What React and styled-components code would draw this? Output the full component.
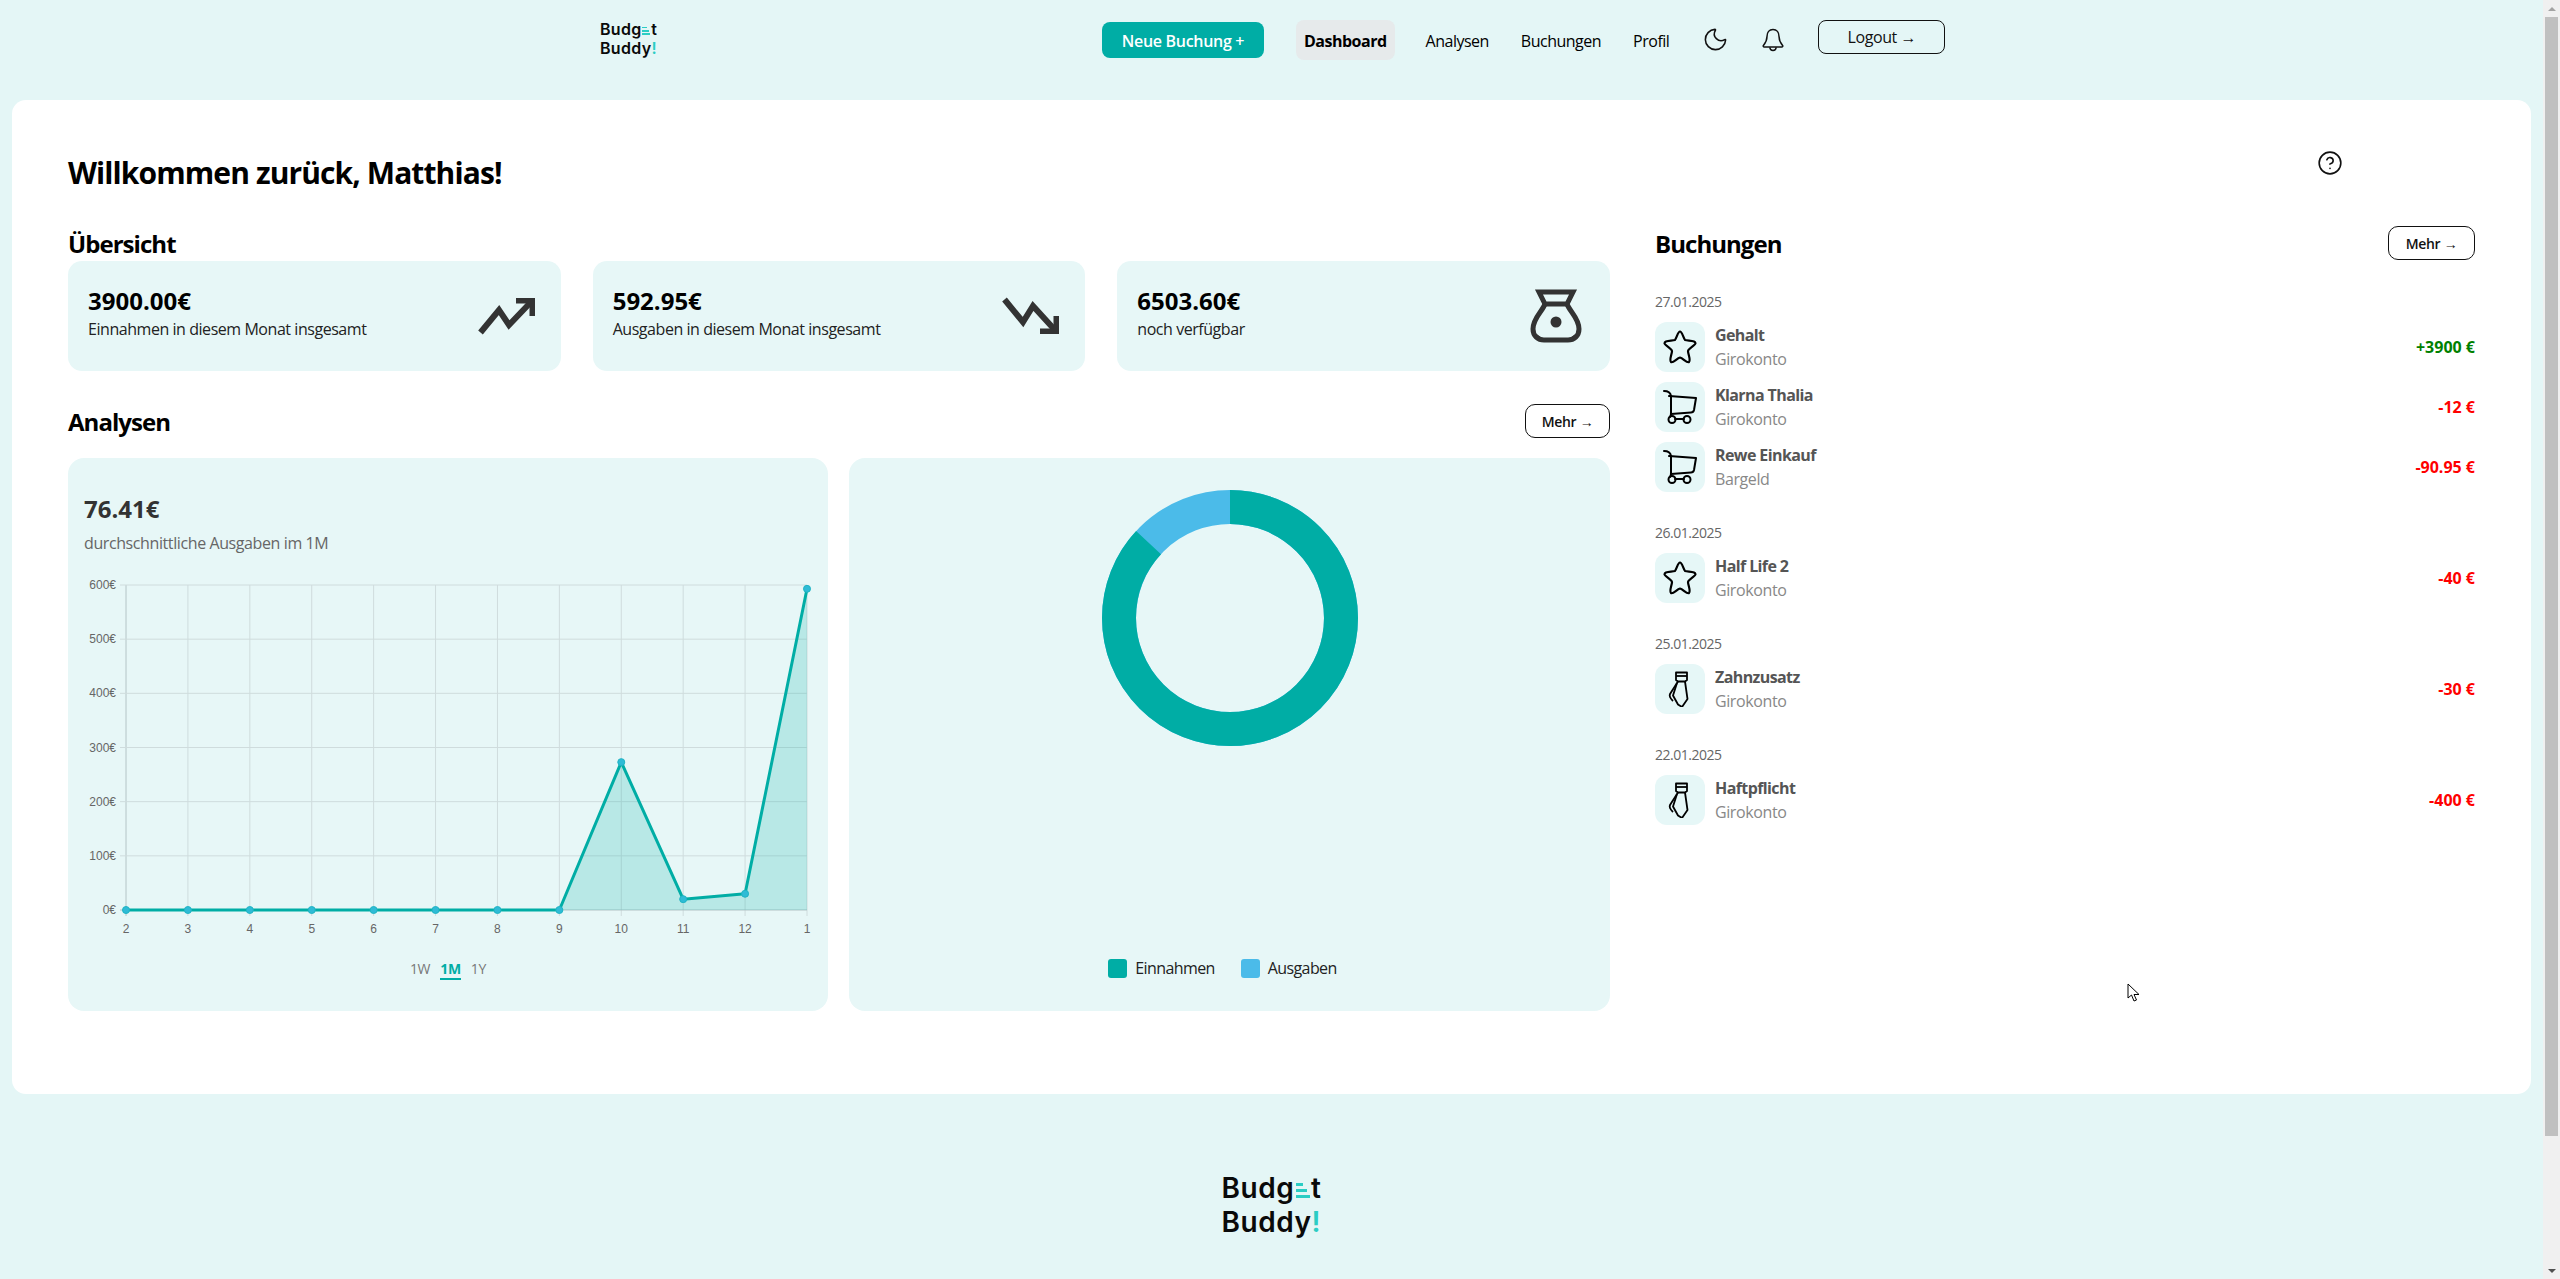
import React from "react";
import styled, { createGlobalStyle } from "styled-components";
import { Moon, CircleHelp } from "lucide-react";

const GlobalStyle = createGlobalStyle`
  html, body {
    margin: 0;
    padding: 0;
    overflow: hidden;
    background: #e4f6f6;
    font-family: "Open Sans", "Noto Sans", "Liberation Sans", sans-serif;
    color: #000;
  }
  * { box-sizing: border-box; }
`;

const Page = styled.div`
  margin-right: 17px;
  height: 1279px;
  display: flex;
  flex-direction: column;
`;

// header
const Header = styled.header`
  height: 100px;
  flex: none;
  display: flex;
  align-items: flex-start;
  padding: 20px 0 0 600px;
`;

const LogoWrap = styled.div`
  font-family: Inter, "Liberation Sans", sans-serif;
  font-weight: 600;
  font-size: ${p => p.$size}px;
  line-height: 1.2;
  letter-spacing: 0.02em;
  color: #0a0a0a;
  width: ${p => p.$width}px;
  flex: none;
  white-space: nowrap;
`;

const LogoBars = styled.span`
  display: inline-block;
  width: 0.5em;
  margin: 0 0.05em;
`;

const LogoBar = styled.i`
  display: block;
  height: 0.1em;
  width: ${p => p.$w}%;
  margin-top: 0.11em;
  background: #2bcdc4;
  &:first-child {
    margin-top: 0;
  }
`;

const Bang = styled.span`
  color: #2bcdc4;
`;

const Nav = styled.nav`
  display: flex;
  align-items: flex-start;
  margin-left: 444px;
`;

const NewButton = styled.button`
  width: 162px;
  height: 36px;
  margin: 2px 32px 0 0;
  padding: 2px 0 0;
  border: 0;
  border-radius: 8px;
  background: #00ada5;
  color: #fff;
  font: 600 16px "Open Sans", sans-serif;
  letter-spacing: -0.3px;
`;

const NavLink = styled.a`
  height: 40px;
  line-height: 42px;
  padding: 0 ${p => (p.$active ? "8px" : "0")};
  margin-right: ${p => (p.$active ? "31px" : "32px")};
  border-radius: 8px;
  font-size: 16px;
  letter-spacing: -0.5px;
  font-weight: ${p => (p.$active ? 700 : 400)};
  background: ${p => (p.$active ? "#e6eaeb" : "transparent")};
`;

const NavIcon = styled.span`
  display: block;
  width: 24px;
  height: 24px;
  margin: 8px 33px 0 ${p => p.$left || 0}px;
`;

const MoonGlyph = styled(Moon)`
  display: block;
  margin: -2px 0 0 -2px;
`;

const LogoutButton = styled.button`
  width: 127px;
  height: 34px;
  border: 1px solid #111;
  border-radius: 8px;
  background: transparent;
  color: #111;
  font: 400 16px "Open Sans", sans-serif;
  letter-spacing: -0.4px;
`;

// main card
const Card = styled.main`
  height: 994px;
  flex: none;
  margin: 0 12px;
  padding: 51px 56px 0;
  background: #fff;
  border-radius: 14px;
`;

const TitleRow = styled.div`
  height: 44px;
  display: flex;
  align-items: center;
  justify-content: space-between;
  padding-right: 132px;
  margin-bottom: 32px;
`;

const Title = styled.h1`
  margin: 0;
  font-size: 30px;
  line-height: 44px;
  font-weight: 700;
  letter-spacing: -0.9px;
`;

const HelpGlyph = styled(CircleHelp)`
  margin-bottom: 20px;
`;

const Columns = styled.div`
  display: grid;
  grid-template-columns: 1542px 820px;
  column-gap: 45px;
`;

const SectionTitle = styled.h2`
  margin: 0;
  font-size: 24px;
  line-height: 34px;
  font-weight: 700;
  letter-spacing: -0.95px;
`;

const SectionRow = styled.div`
  height: 34px;
  display: flex;
  align-items: center;
  justify-content: space-between;
  margin: ${p => p.$margin};
  h2 {
    padding-top: 2px;
  }
`;

const MoreButton = styled.button`
  width: ${p => p.$w}px;
  height: 34px;
  border: 1px solid #111;
  border-radius: 10px;
  background: #fff;
  color: #111;
  font: 600 14px "Open Sans", sans-serif;
  letter-spacing: -0.3px;
`;

const Stats = styled.div`
  display: grid;
  grid-template-columns: repeat(3, 1fr);
  gap: 32px;
`;

const StatCard = styled.div`
  height: 110px;
  display: flex;
  align-items: center;
  justify-content: space-between;
  padding: 0 ${p => p.$right}px 0 20px;
  background: #e7f7f7;
  border-radius: 14px;
`;

const StatText = styled.div`
  padding-bottom: 8px;
`;

const StatValue = styled.div`
  font-size: 24px;
  line-height: 32px;
  font-weight: 700;
  letter-spacing: 0;
`;

const StatLabel = styled.div`
  margin-top: 1px;
  font-size: 16px;
  line-height: 22px;
  letter-spacing: -0.45px;
  color: #222;
`;

const Panels = styled.div`
  display: grid;
  grid-template-columns: 760px 761px;
  gap: 21px;
`;

const Panel = styled.section`
  height: 553px;
  background: #e7f7f7;
  border-radius: 16px;
`;

const LinePanel = styled(Panel)`
  padding-top: 35px;
`;

const DonutPanel = styled(Panel)`
  display: flex;
  flex-direction: column;
  align-items: center;
  justify-content: space-between;
  padding: 32px 0 33px 1px;
`;

const Average = styled.div`
  padding-left: 16px;
  font-size: 24px;
  line-height: 32px;
  font-weight: 700;
  letter-spacing: 0;
  color: #333;
`;

const AverageLabel = styled.div`
  padding-left: 16px;
  margin-top: 7px;
  font-size: 16px;
  line-height: 22px;
  letter-spacing: -0.4px;
  color: #666;
`;

const ChartSvg = styled.svg`
  display: block;
  margin-top: 16px;
`;

const RangeTabs = styled.div`
  display: flex;
  justify-content: center;
  gap: 10px;
  margin-top: 15px;
`;

const RangeTab = styled.span`
  height: 20px;
  line-height: 18px;
  font-size: 14px;
  letter-spacing: -0.3px;
  font-weight: ${p => (p.$active ? 700 : 400)};
  color: ${p => (p.$active ? "#00ada5" : "#777")};
  border-bottom: 2px solid ${p => (p.$active ? "#00ada5" : "transparent")};
`;

const Legend = styled.div`
  display: flex;
  gap: 26px;
  margin-right: 15px;
`;

const LegendItem = styled.div`
  display: flex;
  align-items: center;
  gap: 8px;
  font-size: 16px;
  line-height: 20px;
  letter-spacing: -0.6px;
  color: #222;
`;

const LegendSwatch = styled.span`
  width: 19px;
  height: 19px;
  border-radius: 3px;
  background: ${p => p.$color};
`;

// bookings
const BookingGroup = styled.div`
  margin-bottom: 31px;
`;

const BookingDate = styled.div`
  height: 20px;
  margin-bottom: 10px;
  font-size: 14px;
  line-height: 20px;
  letter-spacing: -0.5px;
  color: #666;
`;

const BookingRows = styled.div`
  display: flex;
  flex-direction: column;
  gap: 10px;
`;

const BookingRow = styled.div`
  display: flex;
  align-items: center;
`;

const BookingIcon = styled.div`
  width: 50px;
  height: 50px;
  flex: none;
  display: flex;
  align-items: center;
  justify-content: center;
  background: #e6f7f7;
  border-radius: 12px;
`;

const BookingText = styled.div`
  flex: 1;
  margin-left: 10px;
`;

const BookingName = styled.div`
  font-size: 16px;
  line-height: 24px;
  font-weight: 700;
  letter-spacing: -0.6px;
  color: #555;
`;

const BookingAccount = styled.div`
  font-size: 16px;
  line-height: 24px;
  letter-spacing: -0.4px;
  color: #888;
`;

const BookingAmount = styled.div`
  font-size: 16px;
  font-weight: 700;
  letter-spacing: 0;
  color: ${p => (p.$income ? "#008000" : "#ff0000")};
`;

const Footer = styled.footer`
  flex: 1;
  display: flex;
  justify-content: center;
  padding-top: 78px;
`;

// window bits lying over the page
const Scrollbar = styled.div`
  position: fixed;
  top: 0;
  right: 0;
  bottom: 0;
  width: 17px;
  display: flex;
  flex-direction: column;
  align-items: center;
  background: #f0f0f0;
`;

const ScrollArrow = styled.span`
  width: 0;
  height: 0;
  border-left: 4px solid transparent;
  border-right: 4px solid transparent;
  border-bottom: ${p => (p.$down ? "0" : "4px solid #a3a3a3")};
  border-top: ${p => (p.$down ? "4px solid #505050" : "0")};
  margin: ${p => (p.$down ? "auto 0 6px" : "7px 0 6px")};
`;

const ScrollThumb = styled.span`
  width: 13px;
  height: 1119px;
  background: #c0c0c0;
`;

const Cursor = styled.svg`
  position: fixed;
  left: 2127px;
  top: 983px;
`;

const TrendUp = () => (
  <svg width="58" height="38" viewBox="0 0 58 38" fill="none">
    <path d="M2.5 35.5L21 13L31 28L52 6" stroke="#333" strokeWidth="6" />
    <path d="M38 1H57V19H51.5V6.5H38Z" fill="#333" />
  </svg>
);

const TrendDown = () => (
  <svg width="58" height="38" viewBox="0 0 58 38" fill="none">
    <path d="M2.5 2.5L21 25L31 9L52 32" stroke="#333" strokeWidth="6" />
    <path d="M38 37H57V19H51.5V31.5H38Z" fill="#333" />
  </svg>
);

const MoneyBag = () => (
  <svg width="52" height="54" viewBox="0 0 52 54" fill="none" stroke="#333" strokeWidth="5">
    <path d="M9 3H43L37 15H15Z" />
    <path d="M15 15C12 23 3 29 3 40C3 47 8 51 14 51H38C44 51 49 47 49 40C49 29 40 23 37 15" />
    <path d="M6 47C10 50 12 51 14 51H38C40 51 42 50 46 47" strokeWidth="4" />
    <circle cx="26" cy="33" r="5.5" fill="#333" stroke="none" />
  </svg>
);

const BellIcon = () => (
  <svg width="24" height="24" viewBox="0 0 24 24" fill="none" stroke="#111" strokeWidth="1.5">
    <path d="M12 1.5C8.2 1.5 6 4.6 6 8.5C6 12.5 4.6 14.8 2.4 17.4C1.9 18.2 2.4 19 3.2 19H20.8C21.6 19 22.1 18.2 21.6 17.4C19.4 14.8 18 12.5 18 8.5C18 4.6 15.8 1.5 12 1.5Z" />
    <path d="M8.8 19.2C9 21.4 10.4 22.6 12 22.6C13.6 22.6 15 21.4 15.2 19.2" />
  </svg>
);

const StarIcon = () => (
  <svg width="36" height="36" viewBox="0 0 36 36" fill="none" stroke="#000" strokeWidth="2.2" strokeLinejoin="round">
    <path d="M18 2.5C20 2.5 21 8 23 11C26 12 33 11 33.5 14C34 16 27 19 26 22C26 25 29 31 27 33C25 34.5 21 29 18 28.5C15 29 11 34.5 9 33C7 31 10 25 10 22C9 19 2 16 2.5 14C3 11 10 12 13 11C15 8 16 2.5 18 2.5Z" />
  </svg>
);

const CartIcon = () => (
  <svg width="36" height="36" viewBox="0 0 36 36" fill="none" stroke="#000" strokeWidth="2" strokeLinecap="round" strokeLinejoin="round">
    <path d="M2 2C6 2 8.5 4 9 7V24C9 26 9 27 8 28" />
    <path d="M7 7L34 9L32 21C31.5 23 31 23.5 29 23.5L9 25" />
    <path d="M13 30H22" />
    <circle cx="10" cy="30.5" r="3.5" />
    <circle cx="25" cy="30.5" r="3.5" />
  </svg>
);

const TieIcon = () => (
  <svg width="36" height="36" viewBox="0 0 36 36" fill="none" stroke="#000" strokeWidth="1.8" strokeLinejoin="round">
    <path d="M14 1.5H25V9L23 10.5H16L14 9Z" />
    <path d="M16 10.5L15 12L11 24.5L16 33.5L20 36L25.5 28L23 10.5" />
    <path d="M15 12L8 23C7 25 8 27 11 30" />
    <path d="M14 5H25" />
  </svg>
);

const Logo = ({ size, width }) => (
  <LogoWrap $size={size} $width={width}>
    <div>
      Budg
      <LogoBars>
        <LogoBar $w={55} />
        <LogoBar $w={80} />
        <LogoBar $w={100} />
      </LogoBars>
      t
    </div>
    <div>
      Buddy<Bang>!</Bang>
    </div>
  </LogoWrap>
);

// chart numbers in page coordinates, the svg viewBox starts at the panel corner
const chartLeft = 126;
const chartRight = 807;
const chartTop = 585;
const chartBottom = 910;
const xLabels = ["2", "3", "4", "5", "6", "7", "8", "9", "10", "11", "12", "1"];
const yTicks = [0, 100, 200, 300, 400, 500, 600];
const spendings = [0, 0, 0, 0, 0, 0, 0, 0, 273, 20, 30, 592.95];

const xAt = i => chartLeft + (i * (chartRight - chartLeft)) / 11;
const yAt = v => chartBottom - (v / 600) * (chartBottom - chartTop);

const LineChart = () => {
  const line = spendings.map((v, i) => `${xAt(i)},${yAt(v)}`).join(" ");
  const area = `M${xAt(0)} ${chartBottom}L${line.replaceAll(" ", "L")}L${chartRight} ${chartBottom}Z`;
  return (
    <ChartSvg width="760" height="375" viewBox="68 570 760 375">
      {xLabels.map((label, i) => (
        <g key={i}>
          <line x1={xAt(i)} x2={xAt(i)} y1={chartTop} y2={chartBottom + 6} stroke={i === 0 ? "#b4c4c6" : "#cfdcdd"} />
          <text x={xAt(i)} y={933} textAnchor="middle" fontFamily="Liberation Sans" fontSize="12" fill="#666">
            {label}
          </text>
        </g>
      ))}
      {yTicks.map(v => (
        <g key={v}>
          <line x1={chartLeft - 6} x2={chartRight} y1={yAt(v)} y2={yAt(v)} stroke={v === 0 ? "#b4c4c6" : "#cfdcdd"} />
          <text x={116} y={yAt(v) + 4} textAnchor="end" fontFamily="Liberation Sans" fontSize="12" fill="#666">
            {v}€
          </text>
        </g>
      ))}
      <path d={area} fill="#00ada5" fillOpacity="0.2" />
      <polyline points={line} fill="none" stroke="#00ada5" strokeWidth="3" strokeLinejoin="round" />
      {spendings.map((v, i) => (
        <circle key={i} cx={xAt(i)} cy={yAt(v)} r="3.5" fill="#2fbbd6" stroke="#1fb4c4" />
      ))}
    </ChartSvg>
  );
};

const Donut = () => {
  const r = 111;
  const c = 2 * Math.PI * r;
  const income = 3900 / (3900 + 592.95);
  return (
    <svg width="256" height="256" viewBox="0 0 256 256">
      <g transform="rotate(-90 128 128)" fill="none" strokeWidth="34">
        <circle cx="128" cy="128" r={r} stroke="#4bbbe9" />
        <circle cx="128" cy="128" r={r} stroke="#00ada5" strokeDasharray={`${c * income} ${c}`} />
      </g>
    </svg>
  );
};

const stats = [
  { value: "3900.00€", label: "Einnahmen in diesem Monat insgesamt", icon: <TrendUp />, right: 25 },
  { value: "592.95€", label: "Ausgaben in diesem Monat insgesamt", icon: <TrendDown />, right: 25 },
  { value: "6503.60€", label: "noch verfügbar", icon: <MoneyBag />, right: 28 },
];

const bookings = [
  {
    date: "27.01.2025",
    rows: [
      { name: "Gehalt", account: "Girokonto", amount: "+3900 €", income: true, icon: <StarIcon /> },
      { name: "Klarna Thalia", account: "Girokonto", amount: "-12 €", icon: <CartIcon /> },
      { name: "Rewe Einkauf", account: "Bargeld", amount: "-90.95 €", icon: <CartIcon /> },
    ],
  },
  { date: "26.01.2025", rows: [{ name: "Half Life 2", account: "Girokonto", amount: "-40 €", icon: <StarIcon /> }] },
  { date: "25.01.2025", rows: [{ name: "Zahnzusatz", account: "Girokonto", amount: "-30 €", icon: <TieIcon /> }] },
  { date: "22.01.2025", rows: [{ name: "Haftpflicht", account: "Girokonto", amount: "-400 €", icon: <TieIcon /> }] },
];

export default function App() {
  return (
    <>
      <GlobalStyle />
      <Page>
        <Header>
          <Logo size={16} width={58} />
          <Nav>
            <NewButton>Neue Buchung +</NewButton>
            <NavLink $active>Dashboard</NavLink>
            <NavLink>Analysen</NavLink>
            <NavLink>Buchungen</NavLink>
            <NavLink>Profil</NavLink>
            <NavIcon $left={3}>
              <MoonGlyph size={27} strokeWidth={1.4} color="#111" />
            </NavIcon>
            <NavIcon>
              <BellIcon />
            </NavIcon>
            <LogoutButton>Logout →</LogoutButton>
          </Nav>
        </Header>

        <Card>
          <TitleRow>
            <Title>Willkommen zurück, Matthias!</Title>
            <HelpGlyph size={26} strokeWidth={1.5} color="#111" />
          </TitleRow>
          <Columns>
            <div>
              <SectionTitle>Übersicht</SectionTitle>
              <Stats>
                {stats.map(s => (
                  <StatCard key={s.value} $right={s.right}>
                    <StatText>
                      <StatValue>{s.value}</StatValue>
                      <StatLabel>{s.label}</StatLabel>
                    </StatText>
                    {s.icon}
                  </StatCard>
                ))}
              </Stats>
              <SectionRow $margin="33px 0 20px">
                <SectionTitle>Analysen</SectionTitle>
                <MoreButton $w={85}>Mehr →</MoreButton>
              </SectionRow>
              <Panels>
                <LinePanel>
                  <Average>76.41€</Average>
                  <AverageLabel>durchschnittliche Ausgaben im 1M</AverageLabel>
                  <LineChart />
                  <RangeTabs>
                    <RangeTab>1W</RangeTab>
                    <RangeTab $active>1M</RangeTab>
                    <RangeTab>1Y</RangeTab>
                  </RangeTabs>
                </LinePanel>
                <DonutPanel>
                  <Donut />
                  <Legend>
                    <LegendItem>
                      <LegendSwatch $color="#00ada5" />
                      Einnahmen
                    </LegendItem>
                    <LegendItem>
                      <LegendSwatch $color="#4bbbe9" />
                      Ausgaben
                    </LegendItem>
                  </Legend>
                </DonutPanel>
              </Panels>
            </div>
            <div>
              <SectionRow $margin="-1px 0 32px">
                <SectionTitle>Buchungen</SectionTitle>
                <MoreButton $w={87}>Mehr →</MoreButton>
              </SectionRow>
              {bookings.map(group => (
                <BookingGroup key={group.date}>
                  <BookingDate>{group.date}</BookingDate>
                  <BookingRows>
                    {group.rows.map(row => (
                      <BookingRow key={row.name}>
                        <BookingIcon>{row.icon}</BookingIcon>
                        <BookingText>
                          <BookingName>{row.name}</BookingName>
                          <BookingAccount>{row.account}</BookingAccount>
                        </BookingText>
                        <BookingAmount $income={row.income}>{row.amount}</BookingAmount>
                      </BookingRow>
                    ))}
                  </BookingRows>
                </BookingGroup>
              ))}
            </div>
          </Columns>
        </Card>

        <Footer>
          <Logo size={28} />
        </Footer>
      </Page>

      <Scrollbar>
        <ScrollArrow />
        <ScrollThumb />
        <ScrollArrow $down />
      </Scrollbar>
      <Cursor width="13" height="19" viewBox="0 0 13 19">
        <path d="M1 1V15L4.5 12L7 18L9.5 17L7 11.5H12Z" fill="#fff" stroke="#000" strokeWidth="1" />
      </Cursor>
    </>
  );
}
